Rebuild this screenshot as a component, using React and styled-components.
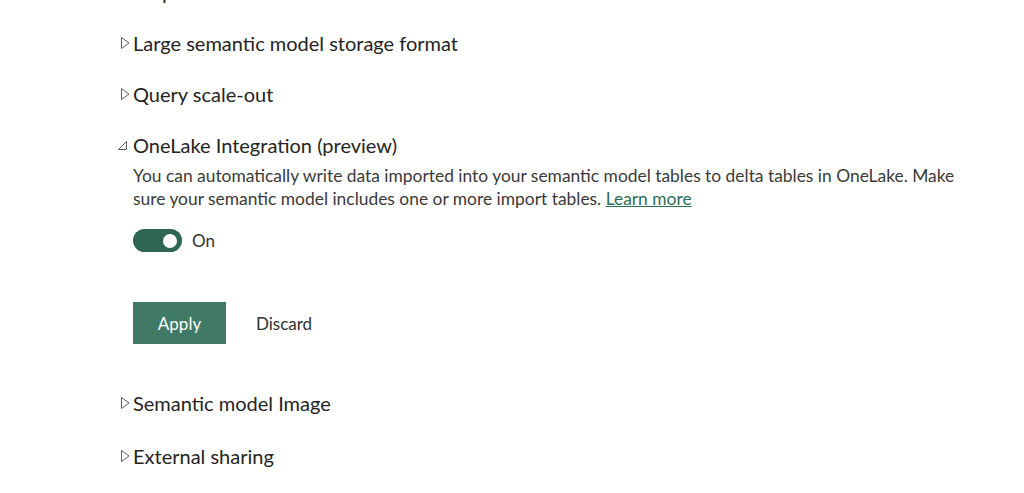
import styled, { createGlobalStyle } from "styled-components";

const GlobalStyle = createGlobalStyle`
    html, body {
        margin: 0;
        padding: 0;
        background: #ffffff;
        overflow: hidden;
    }
    body {
        font-family: "Segoe UI", Lato, "Open Sans", sans-serif;
        color: #323130;
    }
`;

const Page = styled.div`
    width: 1024px;
    height: 493px;
    overflow: hidden;
    padding-left: 118px;
    box-sizing: border-box;
`;

const SectionList = styled.div`
    display: flex;
    flex-direction: column;
    margin-top: -34px;
`;

const Section = styled.div`
    display: flex;
    flex-direction: column;
    padding-bottom: ${(props) => (props.open ? "32px" : "0")};
`;

const SectionHeader = styled.button`
    display: flex;
    align-items: center;
    gap: 2px;
    height: ${(props) => (props.tall ? "53px" : "51px")};
    padding: 0;
    border: none;
    background: none;
    font-family: inherit;
    color: #252423;
    font-size: 20px;
    cursor: pointer;
    text-align: left;
`;

const Chevron = styled.svg`
    width: 13px;
    height: 14px;
    flex-shrink: 0;
`;

const Body = styled.div`
    display: flex;
    flex-direction: column;
    padding-left: 15px;
    margin-top: -6px;
`;

const Description = styled.p`
    margin: 0;
    width: 830px;
    font-size: 17.4px;
    line-height: 23px;
    color: #3b3a39;
`;

const LearnMore = styled.a`
    color: #2d6e57;
    text-decoration: underline;
`;

const ToggleRow = styled.label`
    display: flex;
    align-items: center;
    gap: 10px;
    margin-top: 19px;
    font-size: 17px;
    color: #323130;
`;

const Track = styled.span`
    display: flex;
    align-items: center;
    justify-content: ${(props) => (props.on ? "flex-end" : "flex-start")};
    width: 49px;
    height: 23px;
    padding: 0 5px;
    box-sizing: border-box;
    border-radius: 12px;
    background: ${(props) => (props.on ? "#2e6553" : "#ffffff")};
`;

const Knob = styled.span`
    width: 14px;
    height: 14px;
    border-radius: 50%;
    background: #ffffff;
`;

const Actions = styled.div`
    display: flex;
    align-items: center;
    gap: 4px;
    margin-top: 50px;
`;

const Button = styled.button`
    height: 42px;
    padding: 0 ${(props) => (props.primary ? "24px" : "26px")};
    min-width: ${(props) => (props.primary ? "93px" : "auto")};
    border: none;
    font-family: inherit;
    font-size: 17px;
    color: ${(props) => (props.primary ? "#ffffff" : "#323130")};
    background: ${(props) => (props.primary ? "#407a67" : "transparent")};
    cursor: pointer;
`;

function ChevronIcon({ open }) {
    return (
        <Chevron viewBox="0 0 13 14" fill="none">
            {open ? (
                <polygon points="0.5,11.5 8.5,3.5 8.5,11.5" stroke="#605e5c" strokeWidth="1" />
            ) : (
                <polygon points="3.5,1.5 11,7 3.5,12.5" stroke="#605e5c" strokeWidth="1" />
            )}
        </Chevron>
    );
}

const sections = [
    { title: "Request access" },
    { title: "Large semantic model storage format" },
    { title: "Query scale-out" },
    { title: "OneLake Integration (preview)", open: true },
    { title: "Semantic model Image", tall: true },
    { title: "External sharing", tall: true },
];

function App() {
    return (
        <Page>
            <GlobalStyle />
            <SectionList>
                {sections.map((s) => (
                    <Section key={s.title} open={s.open}>
                        <SectionHeader tall={s.tall}>
                            <ChevronIcon open={s.open} />
                            {s.title}
                        </SectionHeader>
                        {s.open && (
                            <Body>
                                <Description>
                                    You can automatically write data imported into your semantic model tables to delta
                                    tables in OneLake. Make sure your semantic model includes one or more import tables.{" "}
                                    <LearnMore href="#">Learn more</LearnMore>
                                </Description>
                                <ToggleRow>
                                    <Track on>
                                        <Knob />
                                    </Track>
                                    On
                                </ToggleRow>
                                <Actions>
                                    <Button primary>Apply</Button>
                                    <Button>Discard</Button>
                                </Actions>
                            </Body>
                        )}
                    </Section>
                ))}
            </SectionList>
        </Page>
    );
}

export default App;
